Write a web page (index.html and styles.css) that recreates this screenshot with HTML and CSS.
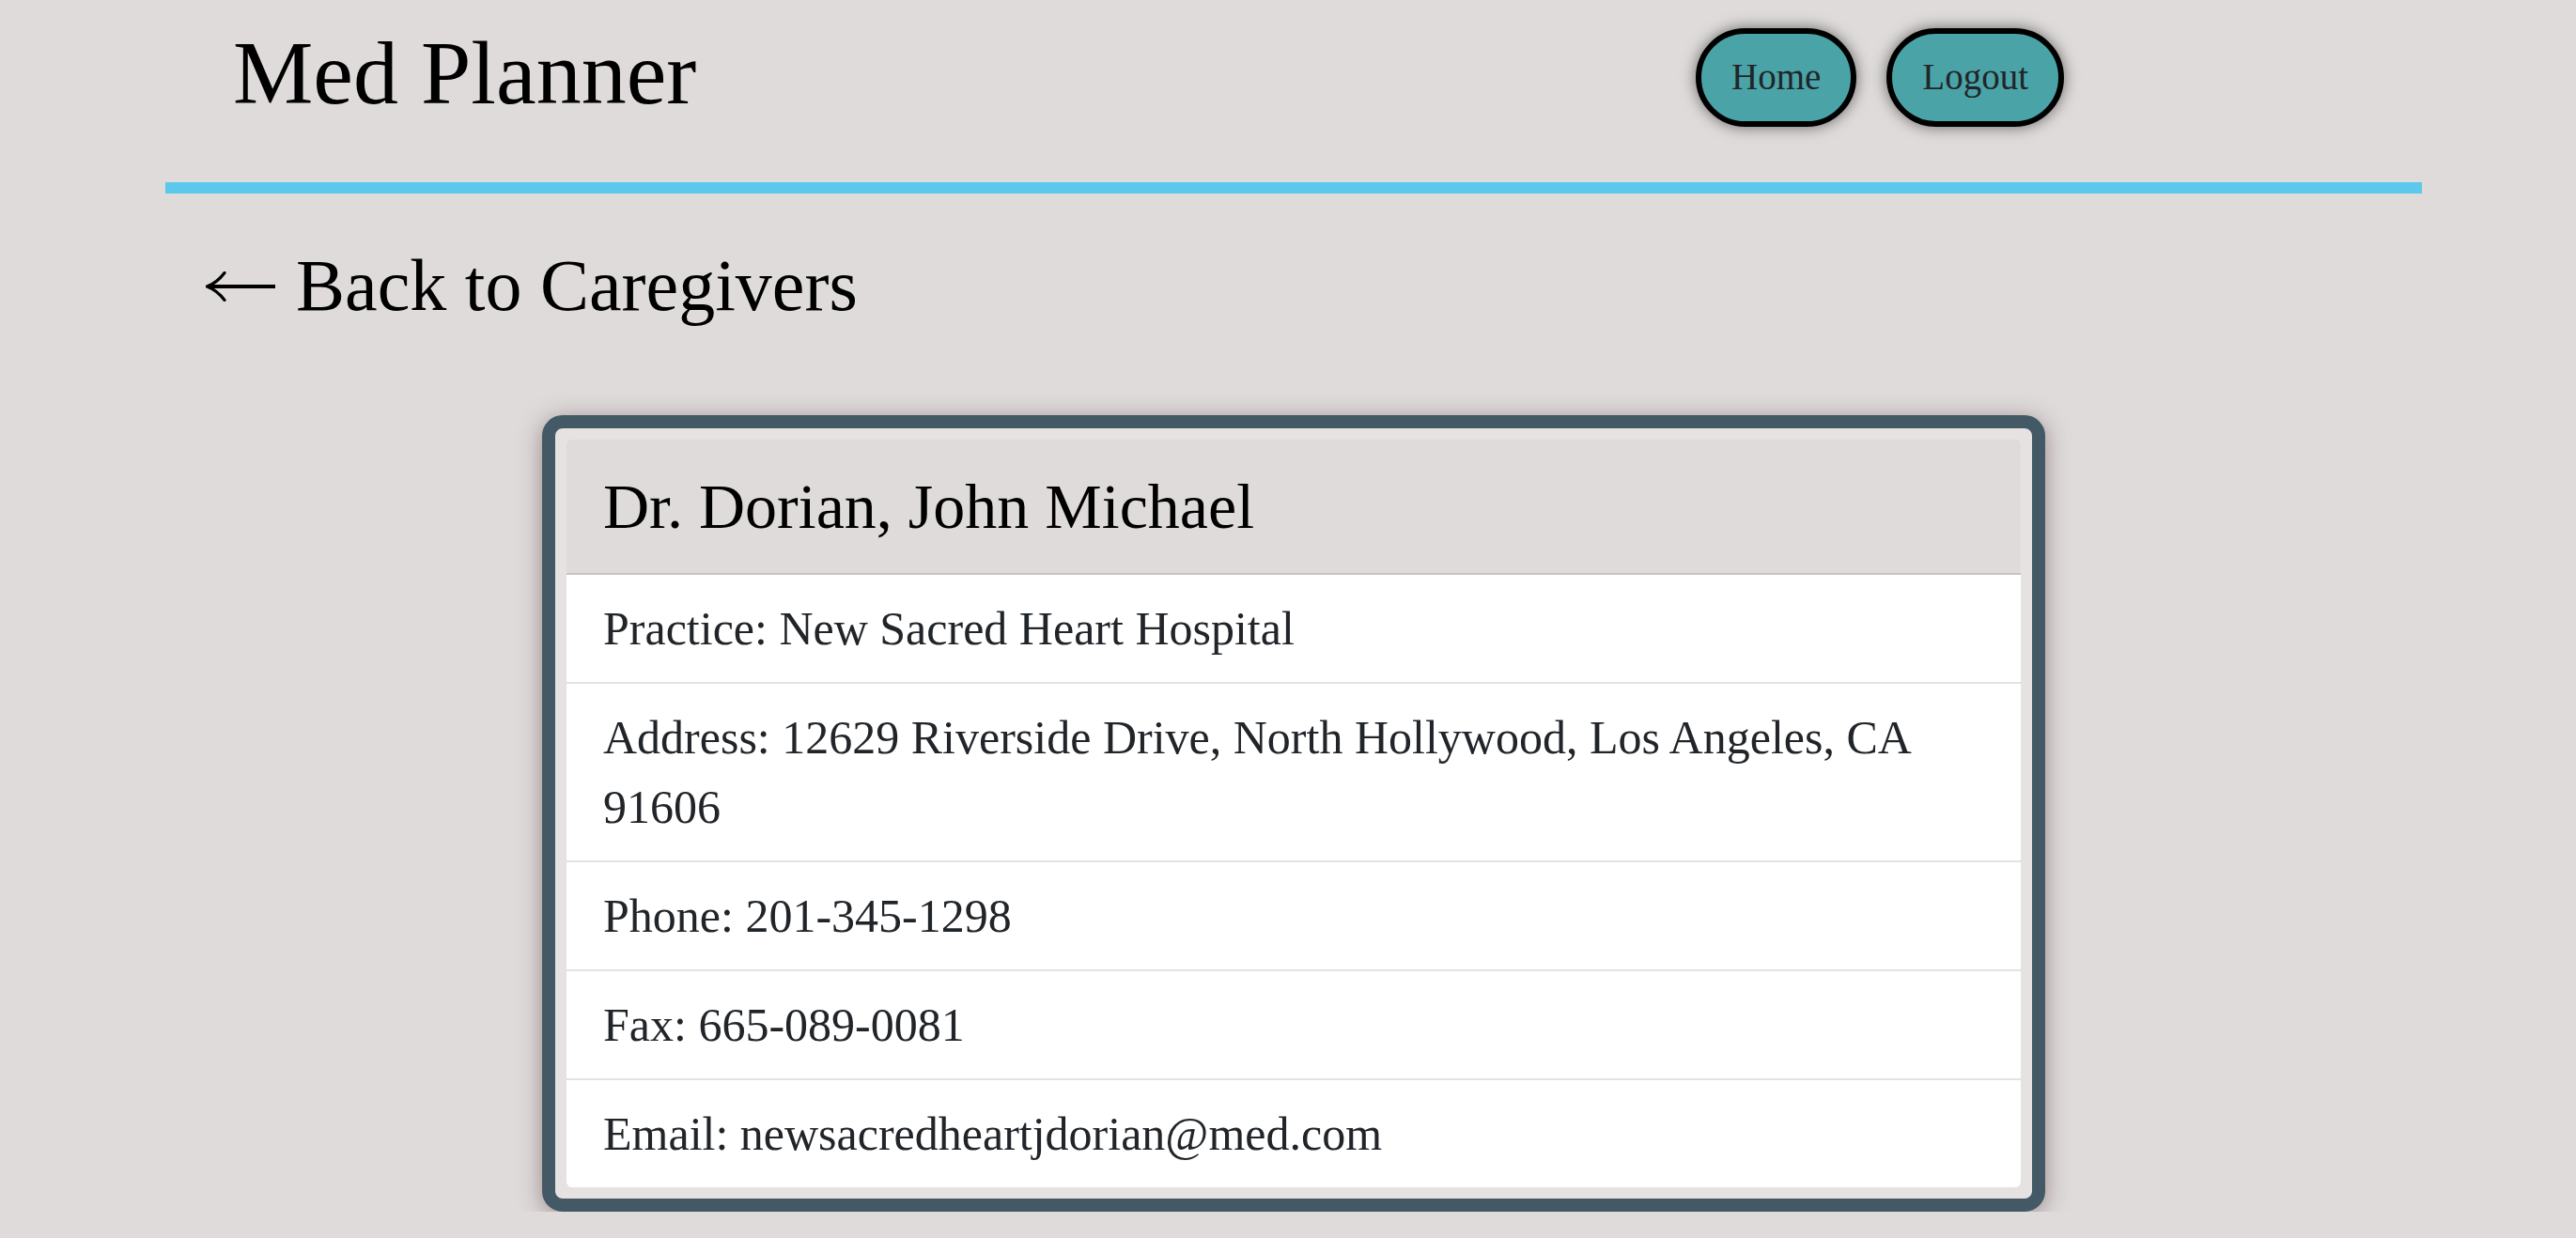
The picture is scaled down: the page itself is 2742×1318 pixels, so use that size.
FILE: index.html
```html
<!DOCTYPE html>
<html lang="en">
<head>
<meta charset="utf-8">
<title>Med Planner</title>
<link rel="stylesheet" href="styles.css">
</head>
<body>
<div class="container">
  <header class="topbar">
    <h1 class="brand">Med Planner</h1>
    <nav class="nav">
      <a class="pill" href="#">Home</a>
      <a class="pill" href="#">Logout</a>
    </nav>
  </header>

  <a class="back" href="#"><svg class="arrow" width="74" height="32" viewBox="0 0 74 32" aria-hidden="true"><path d="M3 16 H74" stroke="#000" stroke-width="4" fill="none"/><path d="M20 1.5 Q 12 12 1.5 16 Q 12 20 20 30.5" stroke="#000" stroke-width="3.2" fill="none" stroke-linecap="round"/></svg>Back to Caregivers</a>

  <section class="card">
    <div class="card-inner">
      <div class="card-header">
        <h2 class="card-title">Dr. Dorian, John Michael</h2>
      </div>
      <ul class="list">
        <li class="item">Practice: New Sacred Heart Hospital</li>
        <li class="item">Address: 12629 Riverside Drive, North Hollywood, Los Angeles, CA 91606</li>
        <li class="item">Phone: 201-345-1298</li>
        <li class="item">Fax: 665-089-0081</li>
        <li class="item">Email: newsacredheartjdorian@med.com</li>
      </ul>
    </div>
  </section>
</div>
</body>
</html>
```

FILE: styles.css
```css
html, body {
  margin: 0;
  padding: 0;
}

body {
  background: #dfdbdb;
  font-family: "Liberation Serif", "Times New Roman", serif;
  color: #000;
  overflow: hidden;
}

.container {
  width: 2402px;
  margin-left: 176px;
}

.topbar {
  display: flex;
  justify-content: space-between;
  align-items: flex-start;
  height: 194px;
  border-bottom: 12px solid #5bc8ec;
}

.brand {
  margin: 20px 0 0 72px;
  font-size: 96px;
  line-height: 115px;
  font-weight: normal;
}

.nav {
  display: flex;
  gap: 32px;
  margin-top: 30px;
  margin-right: 381px;
}

.pill {
  display: block;
  padding: 24px 32px 25px;
  border: 6px solid #000;
  border-radius: 60px;
  background: #4aa4a7;
  color: #212529;
  font-size: 39px;
  line-height: 44px;
  text-decoration: none;
  box-shadow: 0 0 16px rgba(0, 0, 0, 0.55);
}

.back {
  display: flex;
  align-items: center;
  width: max-content;
  margin: 51px 0 0 43px;
  font-size: 78px;
  line-height: 94px;
  color: #000;
  text-decoration: none;
}

.arrow {
  flex: none;
  margin-right: 22px;
  margin-top: 2px;
}

.card {
  box-sizing: border-box;
  width: 1600px;
  margin: 91px auto 0;
  border: 14px solid #435966;
  border-radius: 22px;
  padding: 12px;
  background: #e6e2e1;
  box-shadow: 0 4px 24px rgba(90, 55, 55, 0.5);
}

.card-inner {
  border-radius: 6px;
  overflow: hidden;
}

.card-header {
  background: #dfdbda;
  padding: 30px 39px;
  border-bottom: 2px solid #c7c3c3;
}

.card-title {
  margin: 0;
  font-size: 68px;
  line-height: 82px;
  font-weight: normal;
}

.list {
  list-style: none;
  margin: 0;
  padding: 0;
}

.item {
  background: #fff;
  padding: 20px 39px;
  font-size: 50px;
  line-height: 74px;
  color: #212529;
  border-bottom: 2px solid #e2e2e2;
}

.item:last-child {
  border-bottom: none;
}
```
